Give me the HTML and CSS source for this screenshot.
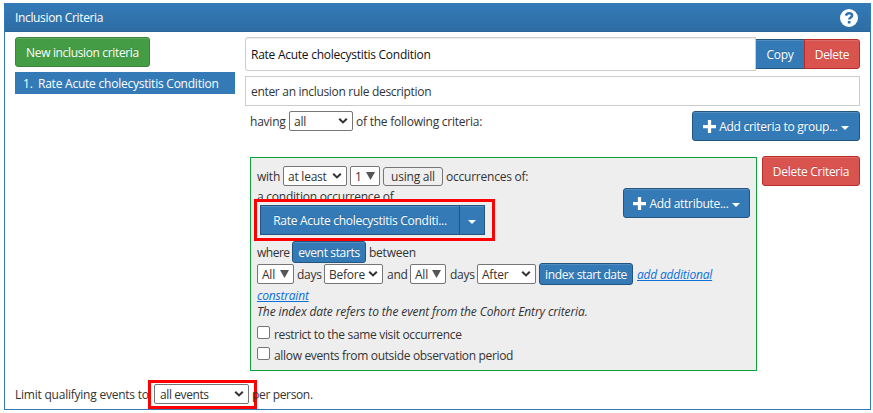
FILE: index.html
```html
<!DOCTYPE html>
<html lang="en">
<head>
<meta charset="utf-8">
<title>Inclusion Criteria</title>
<link rel="stylesheet" href="styles.css">
</head>
<body>
<svg width="0" height="0" class="defs">
  <symbol id="chev" viewBox="0 0 10 8"><path d="M1.2 1.7 5 5.4 8.8 1.7" fill="none" stroke="currentColor" stroke-width="2.1"/></symbol>
  <symbol id="plus" viewBox="0 0 12 12"><path d="M4.5 0h3v4.5H12v3H7.500V12h-3V7.500H0v-3h4.500z" fill="currentColor"/></symbol>
  <symbol id="caret" viewBox="0 0 8 4"><path d="M0 0h8L4 4z" fill="currentColor"/></symbol>
  <symbol id="tri" viewBox="0 0 9 8"><path d="M0 0h9L4.500 8z" fill="currentColor"/></symbol>
</svg>
<main class="panel">
  <header class="heading"><span>Inclusion Criteria</span>
    <svg class="help" viewBox="0 0 18 18"><circle cx="9" cy="9" r="9" fill="#fff"/><path d="M6 6.600C6.400 4.900 7.500 4.200 9.100 4.200c1.900 0 3 1 3 2.400 0 1.900-2.900 2-2.900 4" fill="none" stroke="#3072ad" stroke-width="2.500"/><path d="M7.800 12h2.700v2.500H7.800z" fill="#3072ad"/></svg>
  </header>
  <div class="columns">
    <aside class="rules">
      <button class="btn green">New inclusion criteria</button>
      <div class="rule"><span class="num">1.</span><span>Rate Acute cholecystitis Condition</span></div>
    </aside>
    <section class="editor">
      <div class="name-row">
        <div class="field name">Rate Acute cholecystitis Condition</div>
        <button class="btn blue copy">Copy</button><button class="btn red delete">Delete</button>
      </div>
      <div class="field description">enter an inclusion rule description</div>
      <div class="group-row">
        <div class="line"><span class="w-having">having</span><span class="select s-all">all<svg><use href="#chev"/></svg></span><span class="after">of the following criteria:</span></div>
        <button class="btn blue add-group"><svg class="plus"><use href="#plus"/></svg><span>Add criteria to group...</span><svg class="caret"><use href="#caret"/></svg></button>
      </div>
      <div class="criteria-row">
        <div class="criteria">
          <div class="top">
            <div class="main">
              <div class="line first"><span class="w-with">with</span><span class="select s-least">at least<svg><use href="#chev"/></svg></span><span class="select num-box one">1<svg class="tri"><use href="#tri"/></svg></span><button class="using">using all</button><span class="after">occurrences of:</span></div>
              <div class="condition">a condition occurrence of</div>
              <div class="concept">
                <button class="btn blue concept-name">Rate Acute cholecystitis Conditi...</button><button class="btn blue concept-menu"><svg class="caret"><use href="#caret"/></svg></button>
                <div class="mark mark-concept"></div>
              </div>
            </div>
            <button class="btn blue add-attribute"><svg class="plus"><use href="#plus"/></svg><span>Add attribute...</span><svg class="caret"><use href="#caret"/></svg></button>
          </div>
          <div class="line where"><span class="w-where">where</span><button class="btn blue small starts">event starts</button><span class="between">between</span></div>
          <div class="line window"><span class="select num-box all-one">All<svg class="tri"><use href="#tri"/></svg></span><span class="w-days">days</span><span class="select s-before">Before<svg><use href="#chev"/></svg></span><span class="w-and">and</span><span class="select num-box all-two">All<svg class="tri"><use href="#tri"/></svg></span><span class="w-days two">days</span><span class="select s-before">After<svg><use href="#chev"/></svg></span><button class="btn blue small index">index start date</button><a class="link">add additional</a></div>
          <div class="constraint"><a class="link">constraint</a></div>
          <div class="note">The index date refers to the event from the Cohort Entry criteria.</div>
          <label class="check"><i></i><span>restrict to the same visit occurrence</span></label>
          <label class="check"><i></i><span>allow events from outside observation period</span></label>
        </div>
        <button class="btn red delete-criteria">Delete Criteria</button>
      </div>
    </section>
  </div>
  <footer class="line limit"><span class="w-limit">Limit qualifying events to</span><span class="limit-pick"><span class="select s-events">all events<svg><use href="#chev"/></svg></span><span class="mark mark-events"></span></span><span class="person">per person.</span></footer>
</main>
</body>
</html>
```
FILE: styles.css
```css
* { box-sizing: border-box; }
body { margin: 0; background: #fff; color: #333; font: 12px/18px "Open Sans", "Noto Sans", sans-serif; letter-spacing: -0.23px; white-space: nowrap; }
.defs { position: absolute; }
button { font: inherit; letter-spacing: inherit; padding: 0; }
.panel { width: 867px; height: 407px; margin: 3px 0 0 4px; border: 1px solid #337ab7; }
.heading { height: 28px; display: flex; align-items: center; justify-content: space-between; padding: 1px 12px 0 10px; color: #fff; background: linear-gradient(#337ab7, #2e6da4); border-bottom: 1px solid #2b669a; letter-spacing: -0.35px; }
.help { width: 18px; height: 18px; }
.columns { display: flex; gap: 10px; padding: 5px 10px 0; height: 343px; }
.rules { width: 220px; flex: none; }
.editor { width: 615px; flex: none; }
.btn { display: flex; align-items: center; justify-content: center; height: 30px; padding-top: 2px; letter-spacing: -0.28px; color: #fff; border: 1px solid; border-radius: 3px; flex: none; box-shadow: inset 0 1px 0 rgba(255,255,255,.15); text-shadow: 0 -1px 0 rgba(0,0,0,.15); }
.green { width: 135px; background: #449d44; border-color: #398439; letter-spacing: -0.35px; }
.blue { background: #337ab7; border-color: #245580; }
.red { background: #d9534f; border-color: #b92c28; }
.rule { height: 22px; margin-top: 5px; display: flex; align-items: center; background: #337ab7; color: #fff; padding: 2px 0 0 8px; }
.num { width: 15px; }
.name-row { display: flex; align-items: center; height: 34px; }
.field { border: 1px solid #ccc; display: flex; align-items: center; padding: 2px 0 0 5px; }
.name { width: 511px; height: 34px; color: #111; border-radius: 3px 0 0 3px; box-shadow: inset 0 1px 1px rgba(0,0,0,.075); letter-spacing: -0.26px; }
.copy { width: 49px; border-radius: 0; border-left: 0; }
.delete { width: 56px; margin-left: -1px; border-radius: 0 3px 3px 0; }
.description { height: 30px; margin-top: 5px; letter-spacing: -0.31px; }
.group-row { display: flex; justify-content: space-between; margin-top: 5px; padding-left: 5px; }
.line { display: flex; align-items: center; height: 20px; }
.line > span { flex: none; }
.line > span:not(.select):not(.limit-pick), .line > .link { position: relative; top: 1px; }
.select { display: flex; align-items: center; justify-content: space-between; height: 20px; border: 1px solid #767676; border-radius: 2px; background: #fff; padding: 2px 4px 0; }
.select svg { width: 10px; height: 8px; flex: none; margin-top: -2px; }
.select .tri { width: 9px; height: 8px; color: #555; }
.w-having { width: 39px; }
.s-all { width: 64px; }
.after { margin-left: 3px; }
.add-group { width: 168px; }
.plus { width: 13px; height: 13px; margin: -2px 3px 0 0; }
.caret { width: 8px; height: 4px; margin: 1px 0 0 3px; }
.criteria-row { display: flex; align-items: flex-start; margin-top: 15px; padding-left: 5px; }
.criteria { width: 507px; height: 214px; margin-top: 1px; padding: 8px 6px; border: 1px solid #12a03c; background: #eee; }
.delete-criteria { width: 98px; margin-left: 5px; }
.top { display: flex; justify-content: space-between; height: 75px; }
.w-with { width: 26px; }
.s-least { width: 64px; }
.one { width: 30px; margin-left: 3px; }
.using { width: 60px; height: 19px; margin-left: 3px; padding-top: 1px; background: #efefef; border: 1px solid #767676; border-radius: 3px; color: #333; line-height: 16px; }
.condition { height: 19px; line-height: 22px; }
.concept { position: relative; display: flex; margin-left: 3px; }
.concept-name { width: 200px; border-radius: 0; }
.concept-menu { width: 26px; margin-left: -1px; border-radius: 0; }
.concept-menu .caret { margin: 1px 0 0; }
.mark { position: absolute; border: 3px solid #f00; }
.mark-concept { left: -6px; top: -6px; width: 241px; height: 42px; }
.add-attribute { width: 127px; margin-top: 22px; }
.small { height: 22px; padding-top: 1px; }
.where { height: 22px; }
.w-where { width: 35px; letter-spacing: -0.5px; }
.starts { width: 74px; letter-spacing: -0.35px; }
.between { margin-left: 3px; }
.window { margin-top: 1px; }
.all-one { width: 37px; }
.w-days { width: 27px; padding-left: 3px; margin-right: 3px; }
.two { width: 28px; padding-left: 4px; }
.s-before { width: 59px; }
.w-and { width: 27px; padding-left: 4px; }
.all-two { width: 36px; }
.index { width: 94px; margin-left: 3px; letter-spacing: -0.38px; }
.link { color: #0b6fdc; font-style: italic; text-decoration: underline; letter-spacing: -0.2px; }
.index + .link { margin-left: 4px; }
.constraint { height: 18px; line-height: 23px; }
.note { height: 20px; line-height: 20px; font-style: italic; letter-spacing: -0.12px; }
.check { display: flex; height: 21px; align-items: center; letter-spacing: -0.33px; }
.note + .check { margin-top: 1px; }
.check i { width: 13px; height: 13px; border: 1px solid #767676; border-radius: 2px; background: #fff; margin-top: -3px; }
.check span { margin: 3px 0 0 4px; }
.limit { padding-left: 10px; margin-top: 9px; }
.w-limit { width: 139px; }
.limit-pick { position: relative; }
.s-events { width: 95px; padding-left: 5px; letter-spacing: -0.4px; }
.mark-events { left: -6px; top: -4px; width: 109px; height: 29px; }
.person { margin-left: 3px; letter-spacing: -0.35px; }
```
